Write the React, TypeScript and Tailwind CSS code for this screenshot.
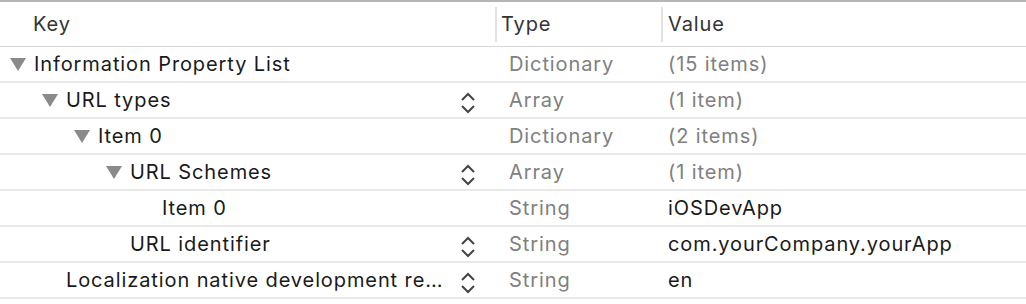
import React from "react";

type Row = {
  key: string;
  level: number;
  tri: boolean;
  stepper: boolean;
  type: string;
  value: string;
  vGray?: boolean;
};

const rows: Row[] = [
  { key: "Information Property List", level: 0, tri: true, stepper: false, type: "Dictionary", value: "(15 items)", vGray: true },
  { key: "URL types", level: 1, tri: true, stepper: true, type: "Array", value: "(1 item)", vGray: true },
  { key: "Item 0", level: 2, tri: true, stepper: false, type: "Dictionary", value: "(2 items)", vGray: true },
  { key: "URL Schemes", level: 3, tri: true, stepper: true, type: "Array", value: "(1 item)", vGray: true },
  { key: "Item 0", level: 4, tri: false, stepper: false, type: "String", value: "iOSDevApp" },
  { key: "URL identifier", level: 3, tri: false, stepper: true, type: "String", value: "com.yourCompany.yourApp" },
  { key: "Localization native development re…", level: 1, tri: false, stepper: true, type: "String", value: "en" },
];

const indent = ["pl-[10px]", "pl-[42px]", "pl-[74px]", "pl-[106px]", "pl-[138px]"];

function Triangle() {
  return (
    <svg width="16" height="14" viewBox="0 0 16 14" className="block">
      <polygon points="0,1 16,1 8,14" fill="#8a8a8a" />
    </svg>
  );
}

function Stepper() {
  return (
    <svg width="16" height="22" viewBox="0 0 16 22" className="block">
      <polyline points="2,8 8,2 14,8" fill="none" stroke="#444" strokeWidth="2" />
      <polyline points="2,14 8,20 14,14" fill="none" stroke="#444" strokeWidth="2" />
    </svg>
  );
}

export default function App() {
  return (
    <div className="w-[1026px] h-[304px] bg-white overflow-hidden text-[20px] tracking-[0.9px] [font-family:Inter,'Liberation_Sans',sans-serif]">
      <div className="flex h-[47px] border-t-2 border-b border-t-[#b5b5b5] border-b-[#d6d6d6] items-center text-[#333]">
        <div className="w-[495px] pl-[33px]">Key</div>
        <div className="w-[2px] h-[35px] bg-[#e2e2e2]" />
        <div className="w-[164px] pl-[4px]">Type</div>
        <div className="w-[2px] h-[35px] bg-[#e2e2e2]" />
        <div className="flex-1 pl-[5px]">Value</div>
      </div>
      {rows.map((r, i) => (
        <div key={i} className="flex h-[36px] items-center border-b-2 border-[#e8e8e8]">
          <div className={`w-[497px] flex items-center pr-[21px] ${indent[r.level]}`}>
            <div className="w-[24px] flex items-center">{r.tri ? <Triangle /> : null}</div>
            <div className="flex-1 whitespace-nowrap text-[#1a1a1a]">{r.key}</div>
            <div className="w-[16px] mt-[6px]">{r.stepper ? <Stepper /> : null}</div>
          </div>
          <div className="w-[164px] pl-[12px] text-[#808080]">{r.type}</div>
          <div className={`flex-1 pl-[7px] ${r.vGray ? "text-[#808080]" : "text-[#1a1a1a]"}`}>{r.value}</div>
        </div>
      ))}
    </div>
  );
}
